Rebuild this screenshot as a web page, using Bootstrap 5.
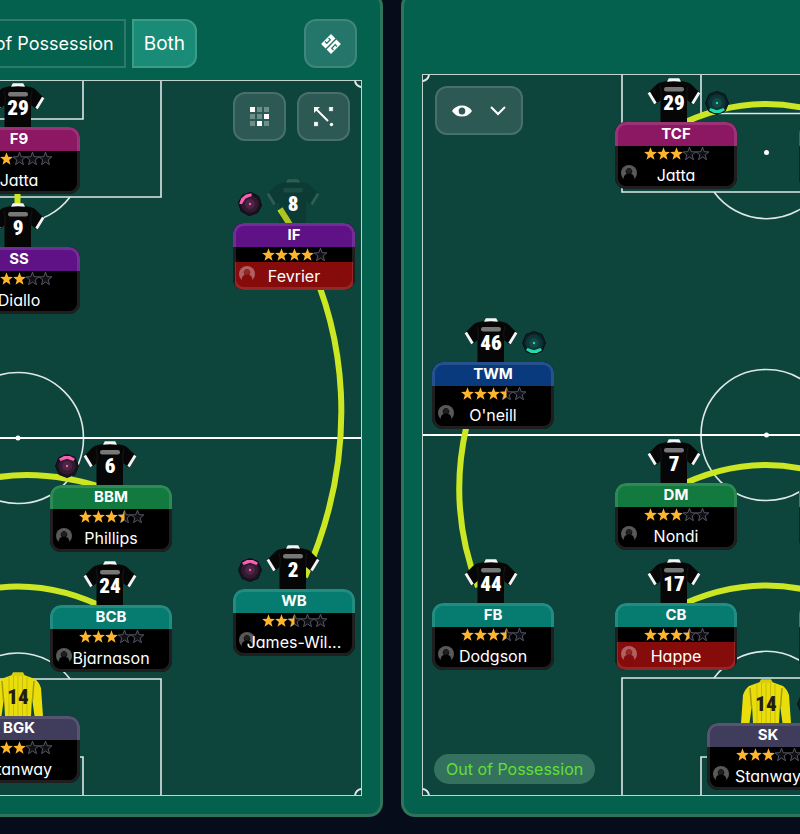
<!DOCTYPE html>
<html lang="en" data-bs-theme="dark">
<head>
<meta charset="utf-8">
<meta name="viewport" content="width=device-width, initial-scale=1">
<title>Tactics</title>
<link href="https://cdn.jsdelivr.net/npm/bootstrap@5.3.0/dist/css/bootstrap.min.css" rel="stylesheet">
<style>
body { background: #070c1a; color: #fff; font-family: Inter, "Liberation Sans", sans-serif; font-feature-settings: "cv11"; font-size: 16px; line-height: 20px; overflow: hidden; }
.board { display: grid; grid-template-columns: 383fr 399fr; gap: 18px; margin-top: -8px; }
.panel { background: #04614e; border: 3px solid #2f735b; min-width: 0; padding: 24px 18px 18px; }
.panel-start { border-left: 0; border-radius: 0 14px 14px 0; padding-left: 0; }
.panel-end { border-right: 0; border-radius: 14px 0 0 14px; padding: 79px 0 18px 18px; }
.toolbar { margin: 0 5px 12px 0; }
.btn { --bs-btn-color: #fff; --bs-btn-hover-color: #fff; height: 49px; border-width: 2px; font-size: 19px; line-height: 24px; padding: 0 10px; white-space: nowrap; }
.seg { border-radius: 0; background: #04614e; border-color: #2f796b; font-size: 18px; }
.seg-on { border-radius: 0 12px 12px 0; background: #198b76; border-color: #3f9b89; }
.seg-group { gap: 6px; margin-right: 107px; }
.tool { width: 53px; padding: 0; border-radius: 12px; background: #24756a; border-color: #40877b; }
.tool-pitch { background: #2c5953; border-color: #496f6a; }
.tool-view { width: 88px; }
.pitch { background: #0d443c; border: 1px solid #c3d3cf; overflow: hidden; }
.pitch-start { height: 716px; border-left: 0; }
.pitch-end { height: 722px; border-right: 0; }
.markings { position: absolute; top: -1px; }
.pitch-start .markings { right: -1px; }
.pitch-end .markings { left: -1px; }
.pitch-tools { position: absolute; top: 11px; z-index: 2; gap: 11px; }
.pitch-start .pitch-tools { right: 11px; }
.pitch-end .pitch-tools { left: 12px; }
.phase { position: absolute; left: 11px; bottom: 11px; height: 30px; padding: 0 12px; background: #34715f; color: #62e02f; line-height: 30px; }
.player { position: absolute; width: 122px; }
.shirt { position: absolute; left: 32px; top: -44px; width: 54px; height: 44px; }
.faded { opacity: .14; }
.num { position: absolute; left: 32px; top: -30px; width: 54px; text-align: center; font: 900 21px/22px "Liberation Sans Narrow", "Roboto Condensed", Roboto, sans-serif; }
.pitch-start .shirt, .pitch-start .num { left: 33px; }
.num-dark { color: #241c12; }
.duty { position: absolute; top: -31px; left: 5px; width: 24px; height: 24px; }
.duty-right { left: 90px; }
.tag { position: relative; height: 67px; border-radius: 11px; overflow: hidden; background: #000; text-align: center; }
.tag::after { content: ""; position: absolute; inset: 0; border: 3px solid rgba(255,255,255,.12); border-radius: 11px; }
.role { height: 24px; font-weight: 700; font-size: 15px; line-height: 24px; }
.stars { height: 15px; display: flex; justify-content: center; align-items: center; }
.who { position: relative; height: 28px; line-height: 28px; margin: 0 2px; }
.who-alert { background: #860b0b; }
.who svg { position: absolute; left: 4px; top: 4px; }
.who span { position: relative; }
.r-magenta { background: #8c1763; } .r-purple { background: #5e1286; } .r-green { background: #12793f; }
.r-teal { background: #067b70; } .r-slate { background: #3f3d5b; } .r-blue { background: #0a3a7e; }
</style>
</head>
<body>
<svg width="0" height="0" class="position-absolute" aria-hidden="true">
  <defs>
    <symbol id="shirt" viewBox="0 0 54 44">
      <path d="M20 3L14 4.300Q11 5 9 7L1 15L9 26L13.500 22V44H40V22L45 26L53 15L45 7Q43 5 40 4.300L34 3Z" fill="#060606"/>
      <path d="M14 22Q15 13 13 8M40 22Q39 13 41 8" fill="none" stroke="#161616"/>
      <path d="M20 3.800L21.800 .3H32.200L34 3.800Q27 2.800 20 3.800Z" fill="#f5f5f5"/>
      <path d="M1.800 14.500L8.500 25.500M52.200 14.500L45.500 25.500" stroke="#f5f5f5" stroke-width="2.800"/>
      <rect x="17" y="9" width="20" height="4.500" rx="2.200" fill="#777"/>
    </symbol>
    <symbol id="keeper" viewBox="0 0 54 44">
      <path d="M21 3L10 7Q6 10 4 16L2 44H10.500L13 26L14 44H40L41 26L43.500 44H52L50 16Q48 10 44 7L33 3Z" fill="#e9de0c"/>
      <path d="M20 4L22 .3H32L34 4Z" fill="#d8cd08"/>
      <path d="M18 5V44M22.500 4V44M27 4V44M31.500 4V44M36 5V44" stroke="#c9bd08"/>
      <path d="M11 9L12.500 28M43 9L41.500 28" stroke="#a79d08" stroke-width="1.500"/>
    </symbol>
    <symbol id="star" viewBox="0 0 13 13"><path d="M6.500 .2L8.200 4.700L12.900 4.900L9.200 7.900L10.500 12.700L6.500 10L2.500 12.700L3.800 7.900L.1 4.900L4.800 4.700Z"/></symbol>
    <clipPath id="half"><path d="M0 0H6.500V13H0Z"/></clipPath>
    <clipPath id="disc"><circle cx="8" cy="8" r="8"/></clipPath>
    <symbol id="person" viewBox="0 0 16 16">
      <path clip-path="url(#disc)" d="M0 0H16V13L13.500 15Q13.500 9.500 10 9A3.300 3.300 0 1 0 6 9Q2.500 9.500 2.500 15L0 13Z" fill="#fff" fill-opacity=".35"/>
      <circle cx="8" cy="6" r="2.800" fill="#fff" fill-opacity=".12"/>
    </symbol>
    <symbol id="duty" viewBox="0 0 24 24">
      <path d="M12 .5L20 3.500L23.500 12L20 20.500L12 23.500L4 20.500L.5 12L4 3.500Z" fill="var(--d1)" stroke="#0b1014"/>
      <circle cx="12" cy="12" r="8.500" fill="var(--d2)"/><circle cx="12" cy="12" r="5" fill="var(--d3)"/>
      <path d="M4 4.800L9 2H15L20 4.800L18.500 7L12 4.800L5.500 7Z" fill="var(--d4)"/>
    </symbol>
  </defs>
</svg>

<main class="board">
  <section class="panel panel-start" aria-label="Both phases">
    <div class="toolbar d-flex justify-content-end">
      <div class="seg-group d-flex">
        <button type="button" class="btn seg">Out of Possession</button>
        <button type="button" class="btn seg-on">Both</button>
      </div>
      <button type="button" class="btn tool flex-shrink-0 d-flex align-items-center justify-content-center" aria-label="Swap pitch">
        <svg width="20" height="20" viewBox="0 0 20 20"><g transform="rotate(45 10 10)"><path d="M3 3H9.300V17H3ZM10.700 3H17V17H10.700Z" fill="#fff"/><path d="M4 7.500H6.500V12.500H4M16 7.500H13.500V12.500H16" fill="none" stroke="#24756a" stroke-width="1.200"/></g></svg>
      </button>
    </div>
    <div class="pitch pitch-start position-relative" id="pitchA">
      <svg class="markings" width="362" height="716" viewBox="0 80 362 716" fill="none" aria-hidden="true">
        <g stroke="#dfe8e6" stroke-width="1.600">
          <path d="M0 119H83V80M0 197H161V80M0 757H83V796M0 679H161V796"/>
          <path d="M-34 197A65 65 0 0 0 70 197M-34 679A65 65 0 0 1 70 679"/>
          <circle cx="18" cy="438" r="65.500"/>
          <path d="M355 80A7 7 0 0 0 362 87M355 796A7 7 0 0 1 362 789" stroke-width="2"/>
        </g>
        <path d="M0 438H362" stroke="#fff" stroke-width="2"/><circle cx="18" cy="438" r="2.500" fill="#fff"/>
        <g stroke="#cbe622" stroke-width="6">
          <path d="M17.500 150V250M280 209C357 325 357 460 305 577M-10 478.500Q45 468 110 490M-75 611Q18 562 111 611"/>
        </g>
      </svg>
      <div class="pitch-tools d-flex">
        <button type="button" class="btn tool tool-pitch d-flex align-items-center justify-content-center" aria-label="Positions">
          <svg width="19" height="19" viewBox="0 0 19 19" fill="#fff"><path fill-opacity=".32" d="M7 0h5v5H7zM14 0h5v5h-5zM0 7h5v5H0zM7 7h5v5H7zM0 14h5v5H0zM14 14h5v5h-5z"/><path d="M0 0h5v5H0zM14 7h5v5h-5zM7 14h5v5H7z"/></svg>
        </button>
        <button type="button" class="btn tool tool-pitch d-flex align-items-center justify-content-center" aria-label="Movement">
          <svg width="20" height="20" viewBox="0 0 20 20" fill="none" stroke="#fff"><path d="M2 2L14 14" stroke-width="2"/><path d="M0 0H6L0 6Z" fill="#fff" stroke="none"/><path d="M15.300 .3L18.700 3.700M18.700 .3L15.300 3.700M.3 15.300L3.700 18.700M3.700 15.300L.3 18.700" stroke-width="2"/><circle cx="17.500" cy="17.500" r="1.700" fill="#fff" stroke="none"/></svg>
        </button>
      </div>
    </div>
  </section>

  <section class="panel panel-end" aria-label="Out of possession">
    <div class="pitch pitch-end position-relative" id="pitchB">
      <svg class="markings" width="520" height="722" viewBox="422 74 520 722" fill="none" aria-hidden="true">
        <g stroke="#dfe8e6" stroke-width="1.600">
          <path d="M701 74V113.500H832V74M622 74V192H911V74M701 796V757H832V796M622 796V678H911V796"/>
          <path d="M714 192A65 65 0 0 0 819 192M714 678A65 65 0 0 1 819 678"/>
          <circle cx="766.500" cy="435" r="65.500"/>
          <path d="M429 74A7 7 0 0 1 422 81M429 796A7 7 0 0 0 422 789" stroke-width="2"/>
        </g>
        <path d="M422 435H942" stroke="#fff" stroke-width="2"/>
        <circle cx="766.500" cy="435" r="2.500" fill="#fff"/><circle cx="766.500" cy="152.500" r="2.500" fill="#fff"/>
        <g stroke="#cbe622" stroke-width="6">
          <path d="M673 128Q766 80 859 128M673 489Q766 441 859 489M673 609Q766 562 859 609M487 365C454 440 450 515 478 587"/>
        </g>
      </svg>
      <div class="pitch-tools">
        <button type="button" class="btn tool tool-pitch tool-view d-flex align-items-center justify-content-center" aria-label="View options">
          <svg width="54" height="12" viewBox="0 0 54 12"><path fill="#fff" fill-rule="evenodd" d="M0 6Q3.500 .5 10 .5T20 6Q16.500 11.500 10 11.500T0 6ZM10 2.500A3.300 3.500 0 1 0 10 9.500A3.300 3.500 0 1 0 10 2.500Z"/><path d="M39 2L46 9L53 2" fill="none" stroke="#fff" stroke-width="2"/></svg>
        </button>
      </div>
      <div class="phase rounded-pill">Out of Possession</div>
    </div>
  </section>
</main>

<script>
// x is the distance from the pitch's inner side edge, y the top of the name tag
const teams = {
  pitchA: { side: "right", players: [
    { x: 281, y: 46,  n: 29, role: "F9",  c: "magenta", s: 2,   name: "Jatta" },
    { x: 281, y: 166, n: 9,  role: "SS",  c: "purple",  s: 3,   name: "Diallo" },
    { x: 6,   y: 142, n: 8,  role: "IF",  c: "purple",  s: 4,   name: "Fevrier", alert: 1, faded: 1, duty: "pink", turn: -40 },
    { x: 189, y: 404, n: 6,  role: "BBM", c: "green",   s: 3.5, name: "Phillips", duty: "pink", turn: 0 },
    { x: 189, y: 524, n: 24, role: "BCB", c: "teal",    s: 3,   name: "Bjarnason" },
    { x: 6,   y: 508, n: 2,  role: "WB",  c: "teal",    s: 2.5, name: "James-Wil...", duty: "pink", turn: 0 },
    { x: 281, y: 635, n: 14, role: "BGK", c: "slate",   s: 3,   name: "Stanway", keeper: 1 }
  ]},
  pitchB: { side: "left", players: [
    { x: 192, y: 47,  n: 29, role: "TCF", c: "magenta", s: 3,   name: "Jatta", duty: "green", turn: 180 },
    { x: 9,   y: 287, n: 46, role: "TWM", c: "blue",    s: 3.5, name: "O'neill", duty: "green", turn: 180 },
    { x: 192, y: 408, n: 7,  role: "DM",  c: "green",   s: 3,   name: "Nondi" },
    { x: 192, y: 528, n: 17, role: "CB",  c: "teal",    s: 3.5, name: "Happe", alert: 1 },
    { x: 9,   y: 528, n: 44, role: "FB",  c: "teal",    s: 3.5, name: "Dodgson" },
    { x: 284, y: 648, n: 14, role: "SK",  c: "slate",   s: 3,   name: "Stanway", keeper: 1, duty: "green", turn: 180 },
    { x: 376, y: 47,  c: "magenta" }, { x: 376, y: 408, c: "green" }, { x: 376, y: 528, c: "teal" }
  ]}
};
const duties = {
  pink:  "--d1:#1d1120;--d2:#321a30;--d3:#4b2544;--d4:#f560b0",
  green: "--d1:#0a2226;--d2:#0d3436;--d3:#124a48;--d4:#22dcb0"
};
const star = v => `<svg width="13" height="13">` +
  (v < 1 ? `<use href="#star" fill="#101014" stroke="#6a6a7c" stroke-width=".8"/>` : "") +
  (v > 0 ? `<use href="#star" fill="#ffb62e"${v < 1 ? ' clip-path="url(#half)"' : ""}/>` : "") + `</svg>`;
const dot = { pink: "#ff5cb0", green: "#22dcb0" };
const card = (p, side) => `<div class="player" style="${side}:${p.x}px;top:${p.y}px">` +
  (p.n ? `<svg class="shirt${p.faded ? " faded" : ""}"><use href="#${p.keeper ? "keeper" : "shirt"}"/></svg>
  <div class="num${p.keeper ? " num-dark" : ""}">${p.n}</div>` : "") +
  (p.duty ? `<svg class="duty${side === "left" ? " duty-right" : ""}" viewBox="0 0 24 24" style="${duties[p.duty]}"><g transform="rotate(${p.turn} 12 12)"><use href="#duty" width="24" height="24"/></g><circle cx="12" cy="12" r="1.200" fill="${dot[p.duty]}"/></svg>` : "") +
  `<div class="tag"><div class="role r-${p.c}">${p.role || ""}</div>` +
  (p.n ? `<div class="stars" role="img" aria-label="${p.s} of 5 stars">${[0,1,2,3,4].map(i => star(Math.max(0, Math.min(1, p.s - i)))).join("")}</div>
  <div class="who${p.alert ? " who-alert" : ""}"><svg width="16" height="16"><use href="#person"/></svg><span>${p.name}</span></div>` : "") +
  `</div></div>`;
for (const [id, t] of Object.entries(teams))
  document.getElementById(id).insertAdjacentHTML("beforeend", t.players.map(p => card(p, t.side)).join(""));
</script>
<script src="https://cdn.jsdelivr.net/npm/bootstrap@5.3.0/dist/js/bootstrap.bundle.min.js"></script>
</body>
</html>
